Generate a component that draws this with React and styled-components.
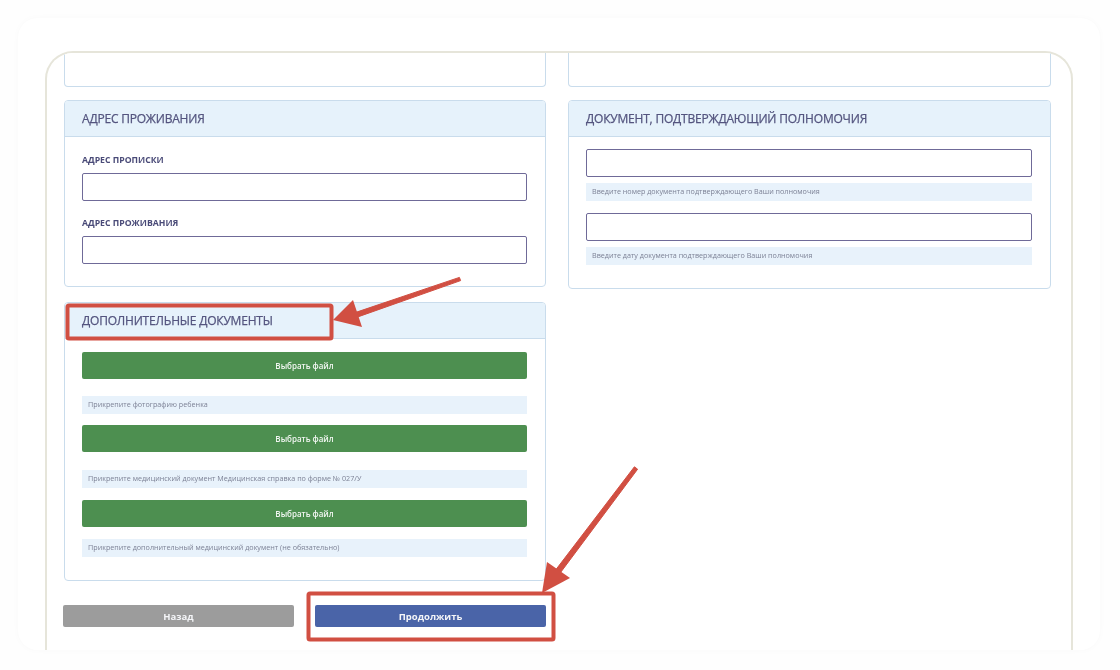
import React from 'react';
import styled, { createGlobalStyle } from 'styled-components';

const GlobalStyle = createGlobalStyle`
  html, body {
    margin: 0;
    padding: 0;
    background: #fff;
    font-family: "Open Sans", "Liberation Sans", sans-serif;
  }
`;

const Page = styled.div`
  position: relative;
  width: 1120px;
  height: 670px;
  overflow: hidden;
  padding: 18px 20px 20px 18px;
  box-sizing: border-box;
  background: #fefefe;
  filter: blur(0.45px);
`;

const Card = styled.div`
  height: 632px;
  box-sizing: border-box;
  padding: 33px 27px 0 27px;
  background: #fff;
  border-radius: 20px;
  box-shadow: 0 0 7px rgba(0, 0, 0, 0.025);
`;

const Frame = styled.div`
  height: 599px;
  box-sizing: border-box;
  padding: 0 20px 0 17px;
  border: 2px solid #e6e5da;
  border-bottom: none;
  border-radius: 28px 28px 0 0;
  overflow: hidden;
`;

const Columns = styled.div`
  display: grid;
  grid-template-columns: 482px 483px;
  column-gap: 22px;
  align-items: start;
`;

const Column = styled.div`
  display: flex;
  flex-direction: column;
`;

const Panel = styled.section`
  box-sizing: border-box;
  height: ${p => p.$height}px;
  margin-bottom: ${p => p.$gap || 0}px;
  border: 1px solid #c9dcec;
  border-radius: 4px;
  background: #fff;
`;

const StubPanel = styled(Panel)`
  border-top: none;
  border-radius: 0 0 4px 4px;
`;

const PanelHeader = styled.h3`
  margin: 0;
  height: 36px;
  box-sizing: border-box;
  padding-left: 17px;
  display: flex;
  align-items: center;
  background: #e6f2fb;
  border-bottom: 1px solid #c9dcec;
  border-radius: 3px 3px 0 0;
  color: #54557f;
  font-size: 12px;
  font-weight: 400;
  letter-spacing: -0.2px;
  -webkit-text-stroke: 0.25px #54557f;
  white-space: nowrap;
`;

const PanelBody = styled.div`
  padding: ${p => p.$top}px 18px 0 17px;
`;

const FieldLabel = styled.div`
  height: 12px;
  margin-bottom: 7px;
  color: #4a4b78;
  font-size: 8.7px;
  font-weight: 700;
  line-height: 12px;
`;

const TextBox = styled.div`
  box-sizing: border-box;
  height: 28px;
  margin-bottom: ${p => p.$gap || 0}px;
  border: 1px solid #6f6a98;
  border-radius: 2px;
  background: #fff;
`;

const Hint = styled.div`
  box-sizing: border-box;
  height: 18px;
  margin-top: ${p => p.$top || 0}px;
  margin-bottom: ${p => p.$gap || 0}px;
  padding-left: 6px;
  background: #e8f2fb;
  color: #7d8296;
  font-size: 7.2px;
  line-height: 17px;
  white-space: nowrap;
`;

const FileButton = styled.button`
  display: block;
  width: 100%;
  height: 27px;
  padding: 0;
  border: none;
  border-radius: 2px;
  background: #4d8f50;
  color: #f1f6f1;
  font-family: inherit;
  font-size: 8px;
  font-weight: 600;
`;

const Actions = styled.div`
  display: grid;
  grid-template-columns: 231px 231px;
  column-gap: 21px;
  margin: 24px 0 0 -1px;
`;

const ActionButton = styled.button`
  height: 22px;
  padding: 0;
  border: none;
  border-radius: 2px;
  background: ${p => p.$bg};
  color: #f4f5f8;
  font-family: inherit;
  font-size: 9.5px;
  font-weight: 700;
`;

const Annotations = styled.svg`
  position: absolute;
  inset: 0;
  width: 1120px;
  height: 670px;
  pointer-events: none;
`;

const RED = '#d14f42';

const App = () => (
  <Page>
    <GlobalStyle />
    <Card>
      <Frame>
        <Columns>
          <Column>
            <StubPanel $height={34} $gap={13} />
            <Panel $height={187} $gap={15}>
              <PanelHeader>АДРЕС ПРОЖИВАНИЯ</PanelHeader>
              <PanelBody $top={17}>
                <FieldLabel>АДРЕС ПРОПИСКИ</FieldLabel>
                <TextBox $gap={16} />
                <FieldLabel>АДРЕС ПРОЖИВАНИЯ</FieldLabel>
                <TextBox />
              </PanelBody>
            </Panel>
            <Panel $height={279}>
              <PanelHeader>ДОПОЛНИТЕЛЬНЫЕ ДОКУМЕНТЫ</PanelHeader>
              <PanelBody $top={13}>
                <FileButton>Выбрать файл</FileButton>
                <Hint $top={17} $gap={11}>Прикрепите фотографию ребенка</Hint>
                <FileButton>Выбрать файл</FileButton>
                <Hint $top={18} $gap={12}>Прикрепите медицинский документ Медицинская справка по форме № 027/У</Hint>
                <FileButton>Выбрать файл</FileButton>
                <Hint $top={12}>Прикрепите дополнительный медицинский документ (не обязательно)</Hint>
              </PanelBody>
            </Panel>
            <Actions>
              <ActionButton $bg="#9c9c9c">Назад</ActionButton>
              <ActionButton $bg="#4a64a8">Продолжить</ActionButton>
            </Actions>
          </Column>
          <Column>
            <StubPanel $height={34} $gap={13} />
            <Panel $height={189}>
              <PanelHeader>ДОКУМЕНТ, ПОДТВЕРЖДАЮЩИЙ ПОЛНОМОЧИЯ</PanelHeader>
              <PanelBody $top={12}>
                <TextBox />
                <Hint $top={6} $gap={12}>Введите номер документа подтверждающего Ваши полномочия</Hint>
                <TextBox />
                <Hint $top={6}>Введите дату документа подтверждающего Ваши полномочия</Hint>
              </PanelBody>
            </Panel>
          </Column>
        </Columns>
      </Frame>
    </Card>
    <Annotations viewBox="0 0 1120 670">
      <rect x="67.5" y="305.5" width="264" height="33" rx="1.5" fill="none" stroke={RED} strokeWidth="4" />
      <rect x="308.5" y="593.5" width="245" height="46" rx="1.5" fill="none" stroke={RED} strokeWidth="4" />
      <path d="M460.6 280.6 L459.4 277.4 L349.2 314.6 L350.8 319.4 Z" fill={RED} stroke={RED} strokeWidth="1" strokeLinejoin="round" />
      <path d="M333 320 L353 300 L362 327 Z" fill={RED} />
      <path d="M637.6 469.2 L634.4 466.8 L550.8 576.3 L555.2 579.7 Z" fill={RED} stroke={RED} strokeWidth="1" strokeLinejoin="round" />
      <path d="M542 593 L547 562 L570 578 Z" fill={RED} />
    </Annotations>
  </Page>
);

export default App;
